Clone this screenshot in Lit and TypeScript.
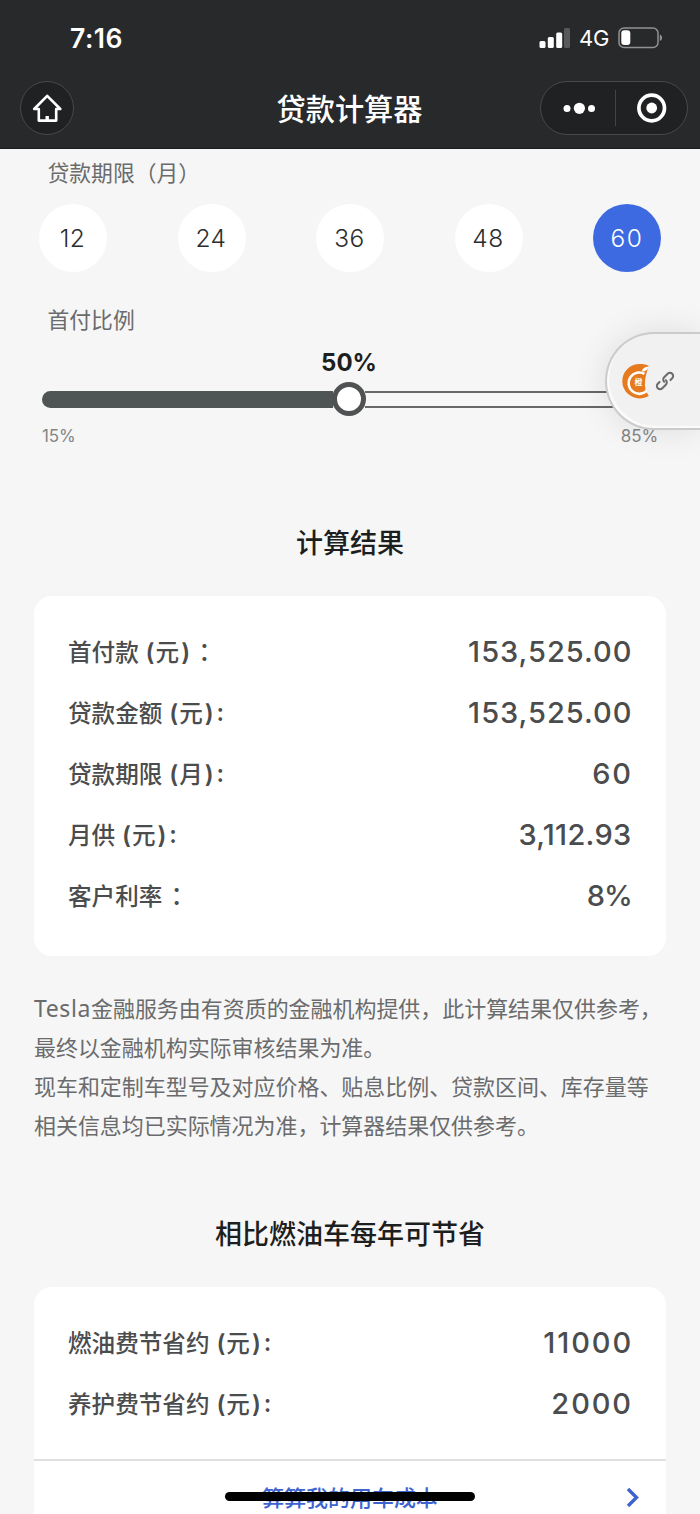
import { LitElement, html, css } from "lit";
import { customElement, property } from "lit/decorators.js";
import { classMap } from "lit/directives/class-map.js";

@customElement("status-bar")
class StatusBar extends LitElement {
  static styles = css`
    :host { display: flex; height: 68px; box-sizing: border-box; padding: 8px 37px 0 70px; align-items: center; justify-content: space-between; color: #fff; font-family: Inter, sans-serif; }
    .time { font-size: 26.5px; font-weight: 600; line-height: 36px; letter-spacing: 0.5px; }
    .right { display: flex; align-items: center; }
    .net { font-size: 22px; line-height: 36px; margin: 0 9px 0 9px; font-weight: 400; letter-spacing: -0.3px; }
    svg { display: block; }
  `;
  render() {
    return html`
      <div class="time">7:16</div>
      <div class="right">
        <svg width="32" height="22" viewBox="0 0 32 22" fill="#fff">
          <rect x="1.5" y="14" width="6" height="7" rx="1.5" />
          <rect x="9.8" y="10" width="6" height="11" rx="1.5" />
          <rect x="18.2" y="5.5" width="6" height="15.5" rx="1.5" />
          <rect x="26" y="1" width="6" height="20" rx="1.5" fill="#58595b" />
        </svg>
        <div class="net">4G</div>
        <svg width="45" height="22" viewBox="0 0 45 22">
          <rect x="1" y="1" width="39" height="19.5" rx="5" fill="none" stroke="#919293" stroke-width="1.5" />
          <rect x="3.3" y="3.3" width="9" height="14.8" rx="3" fill="#fff" />
          <path d="M41.8 7.5c3 1.2 3 5.6 0 6.6z" fill="#919293" />
        </svg>
      </div>`;
  }
}

@customElement("nav-header")
class NavHeader extends LitElement {
  static styles = css`
    :host { display: grid; grid-template-columns: 148px 1fr 148px; height: 81px; box-sizing: border-box; padding: 13px 12px 14px 20px; align-items: center; color: #fff; border-bottom: 1px solid #1b1c1d; }
    .home { width: 52px; height: 52px; border: 1px solid #48494a; border-radius: 50%; background: #202122; display: grid; place-items: center; }
    h1 { margin: 0; padding: 0 9px 2px 0; text-align: center; font: 500 29.2px/40px "Noto Sans CJK SC", sans-serif; }
    .capsule { display: grid; grid-template-columns: 74px 1px 1fr; height: 52px; border: 1px solid #48494a; border-radius: 28px; background: #202122; align-items: center; justify-items: center; }
    .sep { width: 1px; height: 36px; background: #434445; }
    svg { display: block; }
  `;
  render() {
    return html`
      <div class="home">
        <svg width="32" height="32" viewBox="0 0 32 32" fill="none" stroke="#fff" stroke-width="2.6" stroke-linejoin="round" stroke-linecap="round">
          <path d="M16.200 3.800 29.300 17H25.200V28.600H7.800V17H3.200z" />
          <path d="M16.200 24V28.600" stroke-width="3.400" stroke-linecap="butt" />
        </svg>
      </div>
      <h1>贷款计算器</h1>
      <div class="capsule">
        <svg width="34" height="14" viewBox="0 0 34 14" fill="#fff">
          <circle cx="6" cy="7.5" r="3.5" /><circle cx="18.4" cy="7.3" r="5.6" /><circle cx="30.500" cy="7.5" r="3.5" />
        </svg>
        <div class="sep"></div>
        <svg width="32" height="32" viewBox="0 0 32 32">
          <circle cx="15.700" cy="16" r="12.8" fill="none" stroke="#fff" stroke-width="3.7" /><circle cx="15.700" cy="16" r="5.4" fill="#fff" />
        </svg>
      </div>`;
  }
}

@customElement("term-picker")
class TermPicker extends LitElement {
  @property({ type: Array }) terms = [12, 24, 36, 48, 60];
  @property({ type: Number }) selected = 60;
  static styles = css`
    :host { display: flex; justify-content: space-between; padding: 0 39px; }
    .term { box-sizing: border-box; width: 68px; height: 68px; border-radius: 50%; background: #fff; color: #2c2d2e; display: grid; place-items: center; font: 300 24.5px/30px Inter, sans-serif; letter-spacing: 0.5px; padding: 0 1px 1px 0; }
    .on { background: #3e6ae1; color: #fff; letter-spacing: 1.5px; padding-right: 0; }
  `;
  render() {
    return this.terms.map((t) => html`<div class=${classMap({ term: true, on: t === this.selected })}>${t}</div>`);
  }
}

@customElement("ratio-slider")
class RatioSlider extends LitElement {
  @property({ type: Number }) percent = 50;
  static styles = css`
    :host { display: block; padding: 0 42px; font-family: Inter, sans-serif; }
    .value { text-align: center; font-size: 24px; font-weight: 700; line-height: 30px; color: #1d1e20; padding-right: 2px; }
    .row { display: flex; align-items: center; height: 34px; margin-top: 4px; }
    .fill { height: 17px; border-radius: 9px 0 0 9px; background: #4f5554; }
    .knob { box-sizing: border-box; flex: none; width: 34px; height: 34px; margin: 0 -1px; border: 5px solid #4f5152; border-radius: 50%; background: #fff; z-index: 1; }
    .rest { flex: 1; box-sizing: border-box; height: 17px; border: 2px solid #666768; border-left: 0; border-radius: 0 9px 9px 0; }
    .ends { display: flex; justify-content: space-between; padding: 9px 0 0; font-size: 17px; line-height: 22px; color: #848586; letter-spacing: -0.1px; }
  `;
  render() {
    const pos = ((this.percent - 15) / 70) * 100;
    return html`
      <div class="value">${this.percent}%</div>
      <div class="row">
        <div class="fill" style="width: calc(${pos}% - 17px)"></div>
        <div class="knob"></div>
        <div class="rest"></div>
      </div>
      <div class="ends"><span>15%</span><span>85%</span></div>`;
  }
}

@customElement("result-row")
class ResultRow extends LitElement {
  @property() label = "";
  @property() unit = "";
  @property({ type: Boolean }) wide = false;
  @property() value = "";
  static styles = css`
    :host { display: flex; align-items: center; justify-content: space-between; height: 61px; color: #4b4c4d; }
    .label { font: 500 23.6px/36px "Noto Sans CJK SC", sans-serif; white-space: pre; padding-bottom: 2px; }
    .paren { font-family: Inter, sans-serif; font-weight: 600; font-size: 24px; line-height: 1; }
    .open { margin-left: 1.500px; }
    .unit { padding: 0 2px 0 1px; }
    .colon { margin-left: 3px; line-height: 1; vertical-align: 1px; }
    .value { font: 500 29px/36px Inter, sans-serif; letter-spacing: 0.3px; }
    .number { letter-spacing: 1px; margin-right: -1px; }
    .integer { letter-spacing: 1.900px; margin-right: -1.500px; }
    .rate { letter-spacing: -1.200px; }
  `;
  render() {
    const v = this.value;
    const kind = { value: true, number: v.includes(".") && v.length > 8, integer: /^\d+$/.test(v), rate: v.endsWith("%") };
    return html`
      <div class="label">${this.label}${this.unit
        ? html` <span class="paren open">(</span><span class="unit">${this.unit}</span><span class="paren">)</span>`
        : ""}<span class="colon">${this.wide ? " ：" : ":"}</span></div>
      <div class=${classMap(kind)}>${v}</div>`;
  }
}

@customElement("floating-tab")
class FloatingTab extends LitElement {
  static styles = css`
    :host { position: absolute; right: 0; top: 332px; width: 95px; height: 98px; box-sizing: border-box; border: 2px solid #cbcbcb; border-right: 0; border-radius: 49px 0 0 49px; background: #f1f1f1; box-shadow: 0 0 34px rgba(0, 0, 0, 0.1), inset 2px -2px 1px #fbfbfb; display: flex; align-items: center; padding-left: 14px; z-index: 3; }
    svg { display: block; }
    .link { margin-left: 5px; overflow: visible; }
    .mark { font: 700 8px "Noto Sans CJK SC", sans-serif; fill: #fff; }
  `;
  render() {
    return html`
      <svg width="30" height="36" viewBox="0 0 30 36">
        <path d="M27.500 2.500C24 1.300 21.500 1 18.500 1A17.200 17.200 0 0 0 18.500 35.400C22 35.400 25 34.600 27.800 33C24.500 28.500 23.500 24 24 18.500C24.300 13.500 26 9 27.500 2.500z" fill="#e67a1e" />
        <path d="M23.500 10.800A10.700 10.700 0 1 0 25.800 27.800" fill="none" stroke="#fff" stroke-width="2.600" />
        <path d="M20.800 8.400C21.200 5.600 23.800 4.200 27.600 3.600C26.800 6.800 24.200 9.200 20.800 8.400z" fill="#fff" />
        <text class="mark" x="13.500" y="22.400">橙</text>
      </svg>
      <svg class="link" width="18" height="18" viewBox="0 0 18 18" fill="none" stroke="#6b6b6b" stroke-width="2" stroke-linecap="round">
        <g transform="rotate(-45 9 9)">
          <path d="M4.500 5.800H2A3.200 3.200 0 0 0 2 12.200H7A3.200 3.200 0 0 0 10.200 9" />
          <path d="M13.500 12.200H16A3.200 3.200 0 0 0 16 5.800H11A3.200 3.200 0 0 0 7.800 9" />
        </g>
      </svg>`;
  }
}

@customElement("app-root")
class AppRoot extends LitElement {
  static styles = css`
    :host { display: flow-root; position: relative; height: 1514px; overflow: hidden; background: #f6f6f6; font-family: Inter, "Noto Sans CJK SC", sans-serif; }
    .top { background: #28292b; }
    .label { font: 400 21.8px/32px "Noto Sans CJK SC", sans-serif; color: #6a6b6c; padding-left: 47.500px; }
    .term-label { padding-top: 7px; margin-bottom: 16px; }
    .ratio-label { padding-top: 31px; margin-bottom: 13px; }
    h2 { margin: 0; text-align: center; color: #1d1e20; font: 500 27px/40px "Noto Sans CJK SC", sans-serif; }
    .result-title { margin-top: 75px; }
    .saving-title { margin-top: 69px; }
    .card { background: #fff; border-radius: 18px; margin: 34px 34px 0; }
    .results { padding: 25px 34.500px 30px 34px; }
    .savings { border-radius: 18px 18px 0 0; margin-top: 34px; }
    .saving-rows { padding: 25px 34.500px 25px 34px; }
    .note { margin: 32px 34px 0; font: 400 21.960px/39px "Noto Sans CJK SC", sans-serif; color: #6a6b6c; white-space: nowrap; }
    .brand { letter-spacing: 0.600px; font-family: "Noto Sans"; font-size: 23px; line-height: 1; }
    .more { display: grid; grid-template-columns: 30px 1fr 30px; height: 71px; border-top: 2px solid #dedfdf; padding: 0 18px; align-items: center; }
    .more span { text-align: center; color: #3e63cf; font: 500 21.960px/32px "Noto Sans CJK SC", sans-serif; grid-column: 2; }
    .more svg { display: block; justify-self: center; }
    .indicator { position: absolute; left: 225px; top: 1492px; width: 250px; height: 9px; border-radius: 5px; background: #000; z-index: 4; }
  `;
  render() {
    return html`
      <div class="top"><status-bar></status-bar><nav-header></nav-header></div>
      <div class="label term-label">贷款期限（月）</div>
      <term-picker></term-picker>
      <div class="label ratio-label">首付比例</div>
      <ratio-slider></ratio-slider>
      <floating-tab></floating-tab>
      <h2 class="result-title">计算结果</h2>
      <div class="card results">
        <result-row label="首付款" unit="元" wide value="153,525.00"></result-row>
        <result-row label="贷款金额" unit="元" value="153,525.00"></result-row>
        <result-row label="贷款期限" unit="月" value="60"></result-row>
        <result-row label="月供" unit="元" value="3,112.93"></result-row>
        <result-row label="客户利率" wide value="8%"></result-row>
      </div>
      <div class="note">
        <span class="brand">Tesla</span>金融服务由有资质的金融机构提供，此计算结果仅供参考，<br />最终以金融机构实际审核结果为准。<br />现车和定制车型号及对应价格、贴息比例、贷款区间、库存量等<br />相关信息均已实际情况为准，计算器结果仅供参考。
      </div>
      <h2 class="saving-title">相比燃油车每年可节省</h2>
      <div class="card savings">
        <div class="saving-rows">
          <result-row label="燃油费节省约" unit="元" value="11000"></result-row>
          <result-row label="养护费节省约" unit="元" value="2000"></result-row>
        </div>
        <div class="more">
          <span>算算我的用车成本</span>
          <svg width="14" height="20" viewBox="0 0 14 20" fill="none" stroke="#3e63cf" stroke-width="3.400"><path d="M2 2 10.500 10.500 2 19" /></svg>
        </div>
      </div>
      <div class="indicator"></div>`;
  }
}
